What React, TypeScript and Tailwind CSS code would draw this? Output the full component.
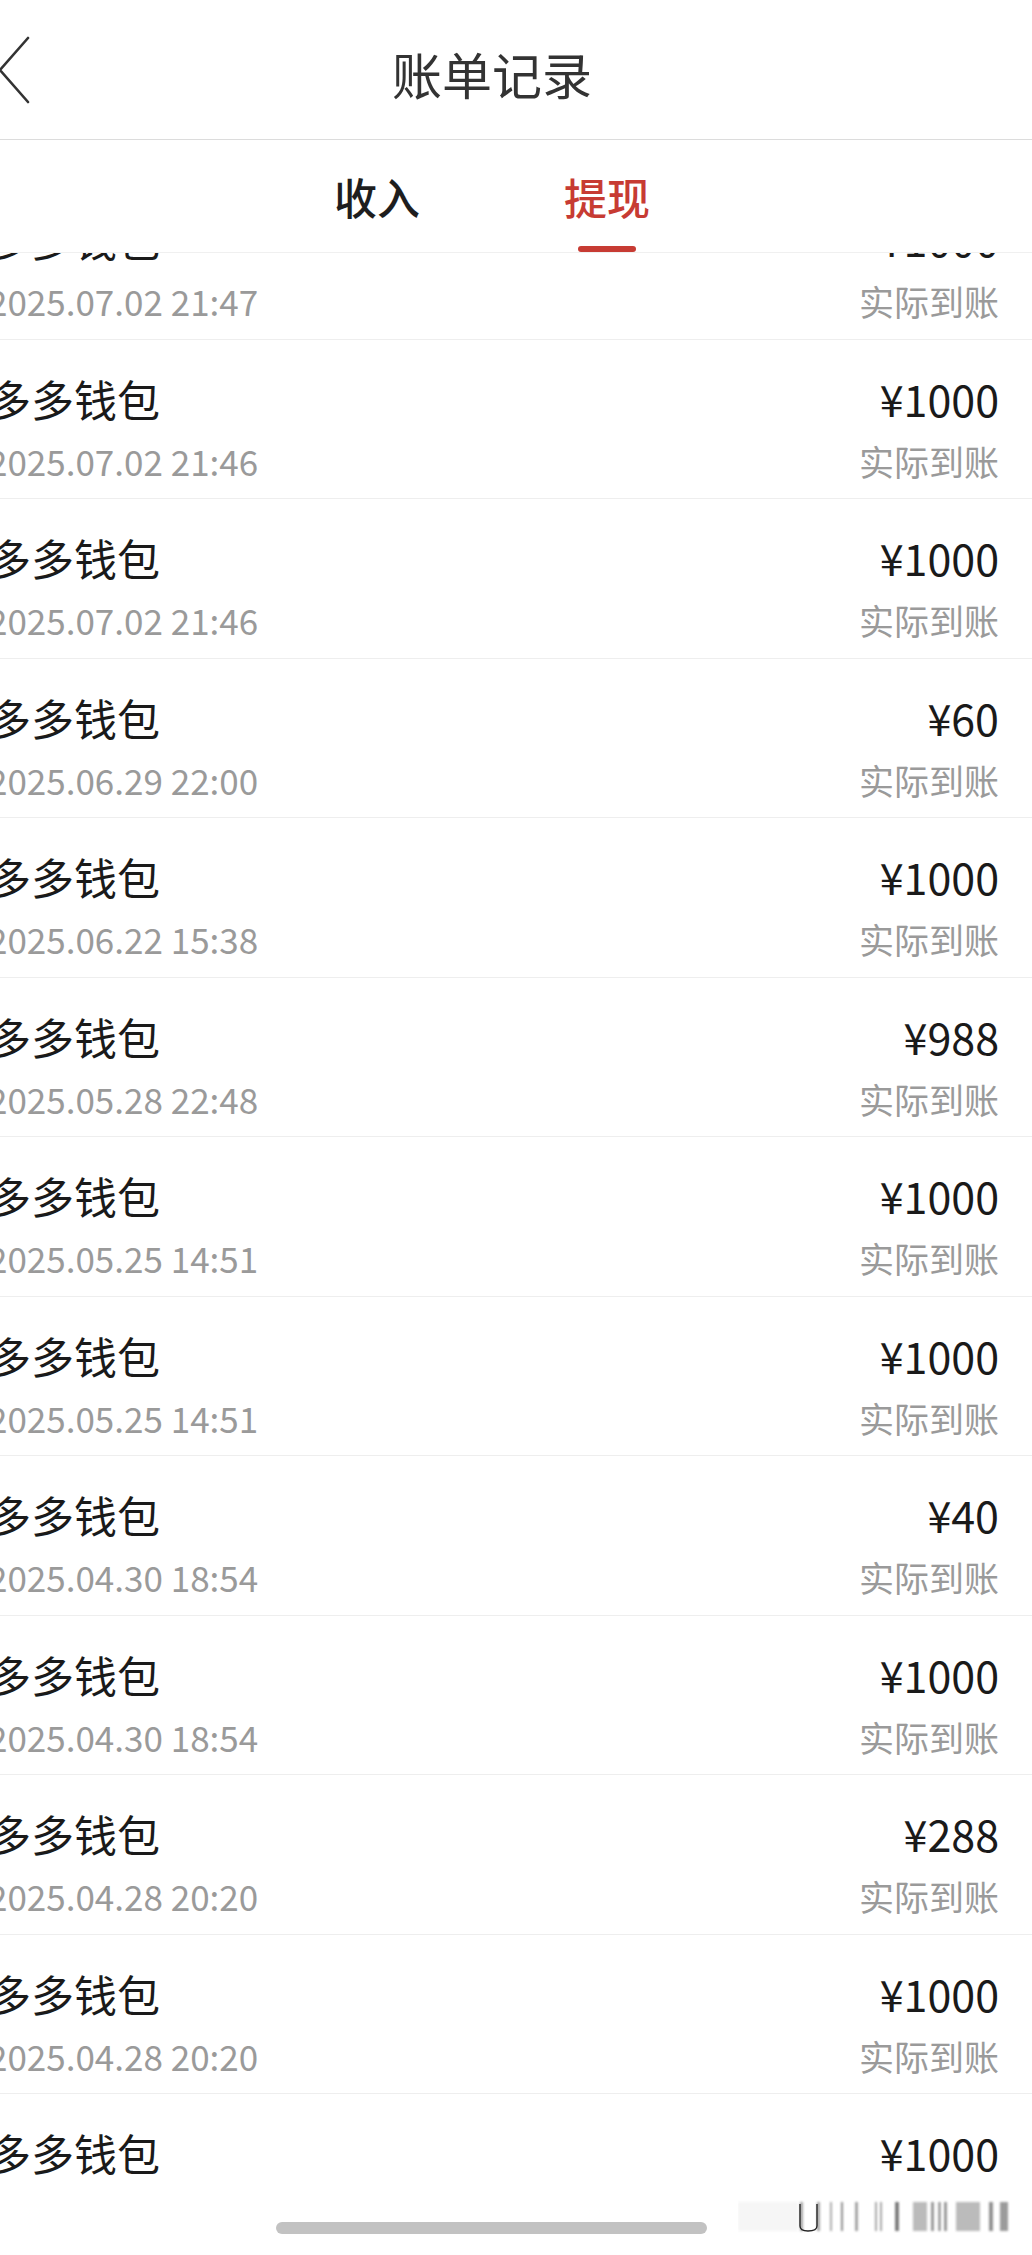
import React from 'react'

const records = [
  { amount: '¥1000', time: '2025.07.02 21:47' },
  { amount: '¥1000', time: '2025.07.02 21:46' },
  { amount: '¥1000', time: '2025.07.02 21:46' },
  { amount: '¥60', time: '2025.06.29 22:00' },
  { amount: '¥1000', time: '2025.06.22 15:38' },
  { amount: '¥988', time: '2025.05.28 22:48' },
  { amount: '¥1000', time: '2025.05.25 14:51' },
  { amount: '¥1000', time: '2025.05.25 14:51' },
  { amount: '¥40', time: '2025.04.30 18:54' },
  { amount: '¥1000', time: '2025.04.30 18:54' },
  { amount: '¥288', time: '2025.04.28 20:20' },
  { amount: '¥1000', time: '2025.04.28 20:20' },
  { amount: '¥1000', time: '2025.04.28 20:20' }
]

function BackArrow() {
  return (
    <svg width="36" height="70" viewBox="0 0 36 70" fill="none">
      <path d="M30 3 L2 35 L30 67" stroke="#333" strokeWidth="2.6" strokeLinecap="round" strokeLinejoin="round" />
    </svg>
  )
}

function Watermark() {
  // blurred strip at the bottom right of the screenshot
  const bars = [
    { x: 0, w: 60, o: 0.05 },
    { x: 62, w: 3, o: 0.45 },
    { x: 79, w: 3, o: 0.45 },
    { x: 92, w: 2, o: 0.4 },
    { x: 103, w: 2, o: 0.55 },
    { x: 117, w: 3, o: 0.45 },
    { x: 137, w: 2, o: 0.45 },
    { x: 142, w: 2, o: 0.45 },
    { x: 157, w: 4, o: 0.65 },
    { x: 175, w: 14, o: 0.35 },
    { x: 193, w: 3, o: 0.5 },
    { x: 200, w: 3, o: 0.45 },
    { x: 206, w: 3, o: 0.5 },
    { x: 218, w: 24, o: 0.35 },
    { x: 251, w: 4, o: 0.55 },
    { x: 262, w: 8, o: 0.5 }
  ]
  return (
    <svg width="272" height="36" viewBox="0 0 272 36">
      <defs>
        <filter id="soft">
          <feGaussianBlur stdDeviation="0.8" />
        </filter>
      </defs>
      <g filter="url(#soft)">
        {bars.map((b, i) => (
          <rect key={i} x={b.x} y={3} width={b.w} height={29} fill="#3a3a3a" opacity={b.o} />
        ))}
      </g>
      <path d="M62 5 V27 Q62 32 70 32 Q79 32 79 27 V5" stroke="#222" strokeWidth="1.4" fill="none" />
    </svg>
  )
}

function RecordRow({ amount, time, first }: { amount: string; time: string; first?: boolean }) {
  return (
    <div
      className={`h-[159.5px] shrink-0 border-b border-[#eeeeee] pl-[36px] pr-[33px] pt-[33px] flex justify-between ${first ? '-mt-[73px]' : ''}`}
    >
      <div className="flex flex-col">
        <p className="text-[43px] leading-[50px] text-[#1a1a1a]">多多钱包</p>
        <p className="mt-[16px] text-[35px] leading-[44px] text-[#9a9a9a]">{time}</p>
      </div>
      <div className="flex flex-col items-end">
        <p className="text-[43px] leading-[50px] text-[#1a1a1a]">{amount}</p>
        <p className="mt-[16px] text-[35px] leading-[44px] text-[#9a9a9a]">实际到账</p>
      </div>
    </div>
  )
}

export default function App() {
  return (
    <div
      className="relative w-[1032px] h-[2255px] overflow-hidden bg-white"
      style={{ fontFamily: '"Noto Sans CJK SC", "Noto Sans", sans-serif' }}
    >
      {/* original screen is 1080 wide, cropped 48px on the left */}
      <div className="w-[1080px] h-full -ml-[48px] flex flex-col">
        {/* Header */}
        <div className="relative h-[140px] shrink-0 border-b border-[#dcdcdc] flex items-center justify-center">
          <div className="absolute left-[46px] top-[35px]">
            <BackArrow />
          </div>
          <h1 className="text-[50px] leading-none text-[#333] pt-[6px]">账单记录</h1>
        </div>

        {/* Tabs */}
        <div className="relative z-10 h-[113px] shrink-0 bg-white border-b border-[#f0f0f0] flex justify-center">
          <div className="relative w-[230px] flex items-center justify-center">
            <span className="text-[43px] font-medium text-[#1e1e1e]">收入</span>
          </div>
          <div className="relative w-[230px] flex items-center justify-center">
            <span className="text-[43px] font-medium text-[#c73b33]">提现</span>
            <div className="absolute bottom-0 w-[58px] h-[6px] rounded-full bg-[#c73b33]" />
          </div>
        </div>

        {/* List */}
        <div className="flex-1 overflow-hidden flex flex-col">
          {records.map((r, i) => (
            <RecordRow key={i} amount={r.amount} time={r.time} first={i === 0} />
          ))}
        </div>
      </div>

      {/* Bottom gesture area */}
      <div className="absolute left-0 right-0 bottom-0 h-[64px] bg-white">
        <div className="absolute left-[276px] top-[31px] w-[431px] h-[12px] rounded-full bg-[#c2c2c2]" />
        <div className="absolute left-[738px] top-[8px]">
          <Watermark />
        </div>
      </div>
    </div>
  )
}
